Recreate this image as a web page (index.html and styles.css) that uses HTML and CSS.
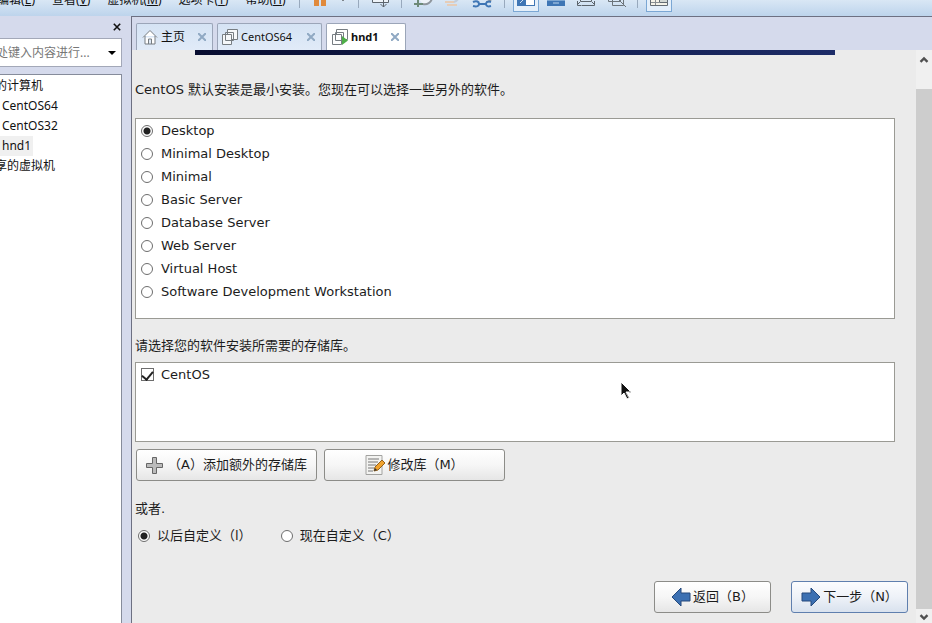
FILE: index.html
```html
<!DOCTYPE html>
<html lang="zh-CN">
<head>
  <meta charset="UTF-8">
  <title>hnd1 - CentOS</title>
  <link rel="stylesheet" href="styles.css">
</head>
<body>
  <header class="toolbar">
    <nav class="menu">
      <a href="#" class="menu-first">编辑(<u>E</u>)</a>
      <a href="#">查看(<u>V</u>)</a>
      <a href="#">虚拟机(<u>M</u>)</a>
      <a href="#">选项卡(<u>T</u>)</a>
      <a href="#">帮助(<u>H</u>)</a>
    </nav>
    <div class="tools">
      <span class="sep"></span>
      <button class="tool" aria-label="暂停"><svg viewBox="0 0 24 24"><path d="M5 3h5v16H5zM12 3h5v16h-5z" fill="#e08a3c"/></svg></button>
      <button class="tool-drop" aria-label="电源选项"><svg viewBox="0 0 12 24"><path d="M2 11h6l-3 3z" fill="#222"/></svg></button>
      <span class="sep"></span>
      <button class="tool" aria-label="发送按键"><svg viewBox="0 0 24 24"><path d="M4.500 5.500h16v10h-16z" fill="#eef3f8" stroke="#5c646c"/><path d="M15.500 11v9M12.500 17l3 3 3-3" fill="none" stroke="#5c646c"/></svg></button>
      <span class="sep"></span>
      <button class="tool" aria-label="拍摄快照"><svg viewBox="0 0 24 24"><path d="M12 17a7 7 0 1 0-5-6" fill="#eef3f8" stroke="#8e959c" stroke-width="2"/><path d="M7 12v8M3 17h9" stroke="#6d8a78" stroke-width="2"/></svg></button>
      <button class="tool" aria-label="恢复快照"><svg viewBox="0 0 24 24"><path d="M4 15h9M6 18h10" stroke="#e6cdb8" stroke-width="2"/><path d="M13 15a7 7 0 0 0 5-6" fill="none" stroke="#c3ccd8" stroke-width="2"/></svg></button>
      <button class="tool" aria-label="管理快照"><svg viewBox="0 0 24 24"><path d="M15 15a6 6 0 0 0 6-6" fill="none" stroke="#8e959c" stroke-width="2"/><path d="M2 15c4-2 6 0 6 2h7c0-2 2-3 5-2M2 19c4 1 6 0 6-2M15 17c0 2 2 3 5 2" fill="none" stroke="#3f76b5" stroke-width="2"/></svg></button>
      <span class="sep"></span>
      <button class="tool tool-on" aria-label="显示库"><svg viewBox="0 0 24 24"><path d="M3 3h18v16H3z" fill="#3f76b5"/><path d="M12 3h8v15h-8z" fill="#fff"/><path d="M6 16l4-4" stroke="#cfe0f2"/></svg></button>
      <button class="tool" aria-label="缩略图栏"><svg viewBox="0 0 24 24"><path d="M3 3h18v16H3z" fill="#3f76b5"/><path d="M3 13h18M9 16h6" stroke="#bcd5ee"/></svg></button>
      <button class="tool" aria-label="全屏"><svg viewBox="0 0 24 24"><path d="M6.500 4.500h11v10h-11zM6 15l-3 3M18 15l3 3M3.500 14v4.500h4M20.500 14v4.500h-4M8 18.500h9" fill="none" stroke="#5c646c"/></svg></button>
      <button class="tool" aria-label="Unity"><svg viewBox="0 0 24 24"><path d="M4.500 4.500h12v10h-12zM8.500 8.500h11v10h-11zM12 10l10 10" fill="none" stroke="#6c747b"/></svg></button>
      <span class="sep"></span>
      <button class="tool tool-on" aria-label="控制台视图"><svg viewBox="0 0 24 24"><path d="M3.500 3.500h17v15h-17z" fill="#f5f3e8" stroke="#646c73"/><path d="M4 15.500h8M8.500 12v6" stroke="#8a8f92"/><path d="M12.500 8.500h8v7h-8z" fill="#d3d8d4" stroke="#646c73"/></svg></button>
    </div>
  </header>

  <div class="workspace">
    <aside class="sidebar">
      <div class="sidebar-head">
        <button class="close-side" aria-label="关闭"><svg viewBox="0 0 10 10"><path d="M1 1l8 8M9 1l-8 8" stroke="#111" stroke-width="2"/></svg></button>
      </div>
      <div class="search">
        <input type="text" placeholder="处键入内容进行..." aria-label="搜索">
        <button class="search-drop" aria-label="搜索选项"><svg viewBox="0 0 8 4"><path d="M0 0h8l-4 4z" fill="#000"/></svg></button>
      </div>
      <ul class="tree">
        <li class="group">的计算机</li>
        <li><a href="#">CentOS64</a></li>
        <li><a href="#">CentOS32</a></li>
        <li><a href="#" class="selected">hnd1</a></li>
        <li class="group">享的虚拟机</li>
      </ul>
    </aside>

    <main class="main">
      <div class="tabs">
        <div class="tab tab-home">
          <svg class="tab-icon" viewBox="0 0 16 16"><path d="M1 8.500L8 1.500l7 7M3 7v8h10V7M6.500 15v-5h3v5" fill="#fff" stroke="#777d82"/></svg>
          <a href="#">主页</a>
          <button class="tab-close" aria-label="关闭主页"><svg viewBox="0 0 8 8"><path d="M0 0l8 8M8 0L0 8" stroke="#90a9c3" stroke-width="2"/></svg></button>
        </div>
        <div class="tab tab-vm">
          <svg class="tab-icon" viewBox="0 0 16 16"><path d="M5.500.500h10v10h-10z" fill="#f6f8fa" stroke="#777d82"/><path d="M.500 5.500h9v10h-9z" fill="#f6f8fa" stroke="#777d82"/><path d="M3.500 3.500h8v8h-8z" fill="none" stroke="#777d82"/></svg>
          <a href="#">CentOS64</a>
          <button class="tab-close" aria-label="关闭 CentOS64"><svg viewBox="0 0 8 8"><path d="M0 0l8 8M8 0L0 8" stroke="#90a9c3" stroke-width="2"/></svg></button>
        </div>
        <div class="tab tab-active">
          <svg class="tab-icon" viewBox="0 0 16 16"><path d="M4.500.500h11v10h-11z" fill="#fff" stroke="#777d82"/><path d="M.500 5.500h9v10h-9z" fill="#fff" stroke="#777d82"/><path d="M3.500 3.500h8v8h-8z" fill="none" stroke="#777d82"/><path d="M10 7l6 4.500-6 4.500z" fill="#4fae49"/></svg>
          <a href="#">hnd1</a>
          <button class="tab-close" aria-label="关闭 hnd1"><svg viewBox="0 0 8 8"><path d="M0 0l8 8M8 0L0 8" stroke="#90a9c3" stroke-width="2"/></svg></button>
        </div>
      </div>

      <div class="console">
        <form class="installer">
          <div class="banner"></div>
          <p class="intro">CentOS 默认安装是最小安装。您现在可以选择一些另外的软件。</p>

          <div class="list packages">
            <label><input type="radio" name="pkg" checked>Desktop</label>
            <label><input type="radio" name="pkg">Minimal Desktop</label>
            <label><input type="radio" name="pkg">Minimal</label>
            <label><input type="radio" name="pkg">Basic Server</label>
            <label><input type="radio" name="pkg">Database Server</label>
            <label><input type="radio" name="pkg">Web Server</label>
            <label><input type="radio" name="pkg">Virtual Host</label>
            <label><input type="radio" name="pkg">Software Development Workstation</label>
          </div>

          <p class="repo-title">请选择您的软件安装所需要的存储库。</p>
          <div class="list repos">
            <label><input type="checkbox" checked>CentOS</label>
            <svg class="pointer" viewBox="0 0 12 19"><path d="M1 1v14l3-3 3 6 2-1-3-6h5z" fill="#111" stroke="#fff"/><path d="M6 12l3 5M9 11h2" stroke="#999"/></svg>
          </div>

          <div class="repo-buttons">
            <button type="button" class="btn btn-repo btn-add">
              <svg class="plus" viewBox="0 0 17 17"><path d="M6.500.500h4v6h6v4h-6v6h-4v-6h-6v-4h6z" fill="#bbb" stroke="#666"/></svg>
              （A）添加额外的存储库
            </button>
            <button type="button" class="btn btn-repo">
              <svg class="note" viewBox="0 0 20 20"><path d="M1 .500h16v19H1z" fill="#f3f3f1" stroke="#a2a2a0"/><path d="M3 4h11M3 7h10M3 10h8M3 13h6M3 16h5" stroke="#777"/><path d="M9 16l1-4 7-7 3 3-7 7z" fill="#f0a22e" stroke="#92601c"/><path d="M9 16l1-3 2 2z" fill="#333"/></svg>
              修改库（M）
            </button>
          </div>

          <p class="or">或者.</p>
          <div class="custom">
            <label><input type="radio" name="custom" checked>以后自定义（l）</label>
            <label><input type="radio" name="custom">现在自定义（C）</label>
          </div>

          <div class="nav-buttons">
            <button type="button" class="btn btn-nav">
              <svg class="arrow" viewBox="0 0 20 20"><path d="M1 10l9-9v5h9v8h-9v5z" fill="#3c70b2" stroke="#24497c"/></svg>
              返回（B）
            </button>
            <button type="button" class="btn btn-nav btn-default">
              <svg class="arrow" viewBox="0 0 20 20"><path d="M19 10l-9-9v5H1v8h9v5z" fill="#3c70b2" stroke="#24497c"/></svg>
              下一步（N）
            </button>
          </div>
        </form>

        <div class="scrollbar">
          <button class="scroll-up" aria-label="向上滚动"><svg viewBox="0 0 8 6"><path d="M1 5l3-3 3 3" fill="none" stroke="#505050" stroke-width="2"/></svg></button>
          <div class="thumb"></div>
          <button class="scroll-down" aria-label="向下滚动"><svg viewBox="0 0 8 6"><path d="M1 1l3 3 3-3" fill="none" stroke="#505050" stroke-width="2"/></svg></button>
        </div>
      </div>
    </main>
  </div>
</body>
</html>
```

FILE: styles.css
```css
* {
  box-sizing: border-box;
}
body {
  margin: 0;
  height: 100vh;
  display: flex;
  flex-direction: column;
  overflow: hidden;
  background: #d5daec;
  color: #111;
  font-family: "Noto Sans", "Noto Sans CJK SC", sans-serif;
  font-size: 12px;
}
a {
  color: inherit;
  text-decoration: none;
}
p, ul {
  margin: 0;
  padding: 0;
}
button {
  padding: 0;
  border: none;
  background: none;
  color: inherit;
  font: inherit;
}
svg {
  display: block;
  flex: none;
}

/* toolbar */
.toolbar {
  flex: none;
  height: 16px;
  display: flex;
  align-items: flex-end;
  overflow: hidden;
  background: linear-gradient(#d9e7f5, #bdd4ec);
}
.menu {
  display: flex;
  align-items: center;
  gap: 17px;
  height: 24px;
  margin-bottom: 4px;
  line-height: 24px;
  white-space: nowrap;
}
.menu-first {
  width: 35px;
  display: flex;
  justify-content: flex-end;
}
.tools {
  display: flex;
  align-items: center;
  gap: 4px;
  margin-left: 9px;
  padding-bottom: 4px;
}
.sep {
  width: 1px;
  height: 18px;
  margin: 0 4px;
  background: #98a9bd;
}
.tool {
  width: 26px;
  height: 26px;
  border: 1px solid transparent;
}
.tool svg {
  width: 24px;
  height: 24px;
}
.tool-on {
  border-color: #7ba7d4;
  background: #e4effa;
}
.tool-drop,
.tool-drop svg {
  width: 12px;
  height: 24px;
}

.workspace {
  flex: 1;
  min-height: 0;
  display: flex;
}

/* sidebar */
.sidebar {
  width: 122px;
  flex: none;
  display: flex;
  flex-direction: column;
}
.sidebar-head {
  height: 22px;
  display: flex;
  align-items: center;
  justify-content: flex-end;
}
.close-side {
  padding: 0 1px;
}
.close-side svg {
  width: 8px;
  height: 8px;
}
.search {
  height: 29px;
  display: flex;
  align-items: center;
  padding-right: 5px;
  border: 1px solid #a3a8b8;
  border-left: none;
  background: #fff;
}
.search input {
  flex: 1;
  min-width: 0;
  padding: 0;
  border: none;
  outline: none;
  background: none;
  text-indent: -4px;
  font: inherit;
}
.search input::placeholder {
  color: #777;
}
.search-drop svg {
  width: 8px;
  height: 4px;
}
.tree {
  flex: 1;
  margin-top: 7px;
  padding-top: 1px;
  list-style: none;
  overflow: hidden;
  background: #fff;
  border: 1px solid #868c9b;
  border-width: 1px 1px 0 0;
  line-height: 20px;
}
.tree .group {
  text-indent: -5px;
}
.tree a {
  display: inline-block;
  padding: 0 2px;
}
.tree .selected {
  background: #f0f0f0;
}

/* tabs */
.main {
  flex: 1;
  min-width: 0;
  margin-left: 9px;
  display: flex;
  flex-direction: column;
  border: 1px solid #6d7082;
  border-width: 1px 0 0 1px;
}
.tabs {
  height: 33px;
  display: flex;
  align-items: flex-end;
  gap: 4px;
  padding-left: 4px;
}
.tab {
  height: 27px;
  display: flex;
  align-items: center;
  gap: 3px;
  padding: 0 6px 0 5px;
  border: 1px solid #9ba5b8;
  border-bottom: none;
  border-radius: 2px 2px 0 0;
  background: linear-gradient(#d5e3f4, #e1ebf8);
}
.tab a {
  margin-top: -2px;
}
.tab-home {
  width: 77px;
}
.tab-vm {
  width: 105px;
  padding-left: 4px;
  font-size: 11px;
}
.tab-active {
  width: 80px;
  background: #fff;
  font-size: 11px;
  font-weight: bold;
}
.tab-icon {
  width: 16px;
  height: 16px;
}
.tab-close {
  margin-left: auto;
}
.tab-close svg {
  width: 8px;
  height: 8px;
}

/* virtual machine screen */
.console {
  flex: 1;
  min-height: 0;
  display: flex;
  background: #ebebeb;
}
.installer {
  flex: 1;
  min-width: 0;
  padding-left: 3px;
  font-family: "DejaVu Sans", "Noto Sans CJK SC", sans-serif;
  font-size: 13px;
  line-height: 20px;
  color: #1c1c1c;
}
.banner {
  height: 5px;
  margin: 0 81px 0 60px;
  background: linear-gradient(90deg, #080d30, #1d2c68);
}
.intro {
  margin-top: 25px;
}
.list {
  margin-right: 21px;
  background: #fff;
  border: 1px solid #9a9a94;
}
.list label {
  display: flex;
  align-items: center;
  gap: 8px;
  height: 23px;
  padding-left: 5px;
}
.packages {
  margin-top: 18px;
  padding-bottom: 15px;
}
.repo-title {
  margin-top: 17px;
}
.repos {
  position: relative;
  min-height: 80px;
  margin-top: 6px;
}
.repos label {
  gap: 7px;
}
.pointer {
  position: absolute;
  left: 484px;
  top: 18px;
  width: 12px;
  height: 19px;
}
input[type="radio"],
input[type="checkbox"] {
  appearance: none;
  flex: none;
  width: 12px;
  height: 12px;
  margin: 0;
  border: 1px solid #6d6d6d;
  background: #fff;
}
input[type="radio"] {
  border-radius: 50%;
}
input[type="radio"]:checked {
  background: radial-gradient(circle, #222 3px, #fff 4px);
}
input[type="checkbox"] {
  display: flex;
  justify-content: center;
  width: 13px;
  height: 13px;
}
input[type="checkbox"]:checked::after {
  content: "";
  width: 5px;
  height: 9px;
  border: solid #222;
  border-width: 0 2px 2px 0;
  transform: rotate(40deg);
}
.btn {
  height: 32px;
  display: flex;
  align-items: center;
  justify-content: center;
  gap: 2px;
  border: 1px solid #8c8c88;
  border-radius: 3px;
  background: linear-gradient(#fff, #f6f6f6 50%, #e6e6e6);
  white-space: nowrap;
}
.repo-buttons {
  display: flex;
  gap: 7px;
  margin-top: 7px;
  padding-left: 1px;
}
.btn-repo {
  width: 181px;
}
.btn-add {
  gap: 5px;
}
.plus {
  width: 17px;
  height: 17px;
}
.note,
.arrow {
  width: 20px;
  height: 20px;
}
.or {
  margin-top: 18px;
}
.custom {
  display: flex;
  gap: 29px;
  margin-top: 7px;
  padding-left: 3px;
}
.custom label {
  display: flex;
  align-items: center;
  gap: 7px;
}
.nav-buttons {
  display: flex;
  justify-content: flex-end;
  gap: 20px;
  margin-top: 35px;
  padding-right: 8px;
}
.btn-nav {
  width: 117px;
}
.btn-default {
  border-color: #5f7fae;
  background: linear-gradient(#fbfcfe, #eef2f8 50%, #d9e2ee);
}

/* scrollbar */
.scrollbar {
  width: 16px;
  display: flex;
  flex-direction: column;
  background: #f0f0f0;
}
.scrollbar button {
  display: flex;
  justify-content: center;
}
.scrollbar svg {
  width: 10px;
  height: 7px;
}
.scroll-up {
  height: 39px;
  padding-top: 6px;
}
.thumb {
  flex: 1;
  background: #cdcdcd;
}
.scroll-down {
  height: 14px;
  padding-top: 5px;
}
```
